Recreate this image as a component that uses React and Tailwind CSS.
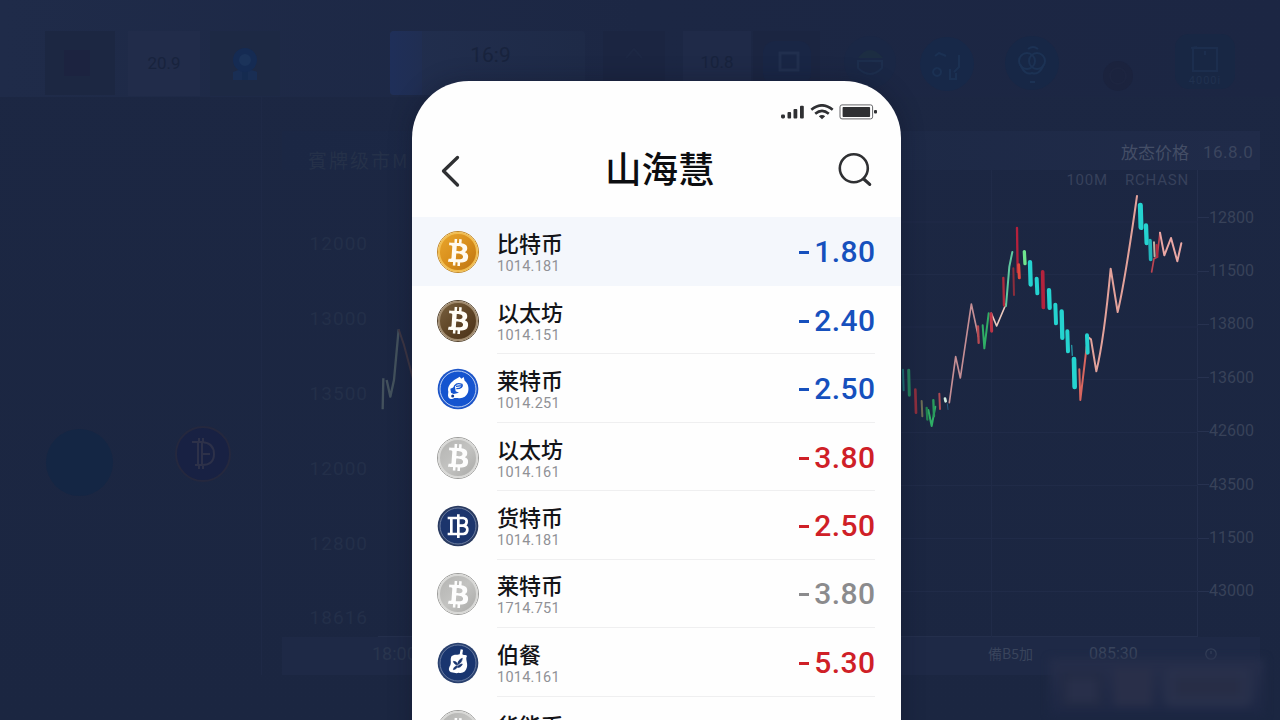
import React from "react";
import { FaBtc } from "react-icons/fa";

const cjk = "font-['Noto_Sans_CJK_SC','Noto_Sans',sans-serif]";
const latin = "font-[Roboto,'Liberation_Sans',sans-serif]";

/* ---------- coins ---------- */

function BtcCoin({ face, ring, edge, mark, tilt = "rotate-[4deg]" }) {
  return (
    <div className={`flex size-[42px] shrink-0 items-center justify-center rounded-full border ${edge}`}>
      <div className={`flex size-full items-center justify-center rounded-full border-2 ${ring} ${face}`}>
        <FaBtc className={`size-[27px] ${mark} ${tilt}`} />
      </div>
    </div>
  );
}

function LeafCoin() {
  return (
    <svg className="size-[42px] shrink-0" viewBox="0 0 126 126">
      <circle cx="63" cy="63" r="61" fill="#1d55c8" />
      <circle cx="63" cy="63" r="54" fill="#1554cf" stroke="#dfe9fb" strokeWidth="2.5" />
      <path
        d="M62 30 L68 26 L73 32 L80 27 L83 38 C93 45 97 60 93 73 C88 87 75 93 62 90 L52 90 C47 95 37 94 34 87 C31 80 36 73 33 66 C33 50 48 37 62 30Z"
        fill="#fff"
      />
      <path d="M50 62 C52 48 62 44 75 49 C78 55 73 62 58 62 M57 55 L74 53" fill="none" stroke="#1554cf" strokeWidth="4" />
      <path d="M40 62 L54 56 L56 70 L66 74 L50 78 L42 74Z" fill="#1554cf" />
      <circle cx="47" cy="84" r="4.5" fill="#123a91" />
    </svg>
  );
}

function FruitCoin() {
  return (
    <svg className="size-[42px] shrink-0" viewBox="0 0 126 126">
      <circle cx="63" cy="63" r="61" fill="#2a416f" />
      <circle cx="63" cy="63" r="54" fill="#19356f" stroke="#7486aa" strokeWidth="2.5" />
      <path
        d="M44 42 C54 35 60 40 68 37 L71 22 L78 23 L76 37 C82 41 88 38 90 42 C84 51 93 62 90 75 C87 89 77 95 65 92 C57 96 49 90 42 91 C32 86 36 76 40 70 C44 60 38 52 44 42Z"
        fill="#fff"
      />
      <path d="M76 49 C67 52 62 59 62 68 C70 65 75 58 76 49Z M49 58 C57 58 61 62 61 69 C55 68 50 64 49 58Z M76 66 C70 66 63 70 61 76 C68 77 74 73 76 66Z M49 83 C50 76 55 72 61 71 C61 78 56 82 49 83Z" fill="#19356f" stroke="#19356f" strokeWidth="2" />
    </svg>
  );
}

const gold = (
  <BtcCoin
    edge="border-[#c28726]"
    ring="border-[#f1bd50]"
    face="bg-linear-to-br from-[#e8a52c] via-[#d98f1c] to-[#bd7413]"
    mark="text-[#fffaf0]"
  />
);
const bronze = (
  <BtcCoin
    edge="border-[#54432e]"
    ring="border-[#a08a6d]"
    face="bg-linear-to-br from-[#78603f] via-[#5f4526] to-[#4b3218]"
    mark="text-[#fffdf6]"
  />
);
const silver = (
  <BtcCoin
    edge="border-[#9c9c9a]"
    ring="border-[#d8d8d6]"
    face="bg-linear-to-br from-[#b4b4b2] via-[#c3c3c1] to-[#aaaaa8]"
    mark="text-[#fdfdfd]"
  />
);

function NavyCoin() {
  return (
    <svg className="size-[42px] shrink-0" viewBox="0 0 126 126">
      <circle cx="63" cy="63" r="61" fill="#2a3b61" />
      <circle cx="63" cy="63" r="54" fill="#1c356c" stroke="#7b8aab" strokeWidth="2.5" />
      <g fill="none" stroke="#fff" strokeWidth="8">
        <path d="M32 39 H79 Q90 41 89 51 Q88 60 79 62 Q92 65 91 75 Q90 86 79 87 H32" />
        <path d="M43 39 V87 M64 28 V99 M64 62 H80" />
      </g>
    </svg>
  );
}

const rows = [
  { name: "比特币", sub: "1014.181", value: "1.80", color: "text-[#1650bd]", coin: gold, active: true },
  { name: "以太坊", sub: "1014.151", value: "2.40", color: "text-[#1650bd]", coin: bronze },
  { name: "莱特币", sub: "1014.251", value: "2.50", color: "text-[#1650bd]", coin: <LeafCoin /> },
  { name: "以太坊", sub: "1014.161", value: "3.80", color: "text-[#cf2027]", coin: silver },
  { name: "货特币", sub: "1014.181", value: "2.50", color: "text-[#cf2027]", coin: <NavyCoin /> },
  { name: "莱特币", sub: "1714.751", value: "3.80", color: "text-[#8b8b8d]", coin: silver },
  { name: "伯餐", sub: "1014.161", value: "5.30", color: "text-[#cf2027]", coin: <FruitCoin /> },
];

function Row({ row }) {
  return (
    <li className={`flex shrink-0 pl-[25px] pr-[26px] ${row.active ? "h-[69px] bg-[#f4f7fc]" : "h-[68.45px]"}`}>
      <div className="flex items-center pt-px">{row.coin}</div>
      <div className={`ml-[18px] flex flex-1 items-center justify-between border-b pt-[2px] ${row.active ? "border-transparent" : "border-[#efeff0]"}`}>
        <div className="flex flex-col pt-px">
          <span className={`${cjk} text-[22px] font-medium leading-[26px] text-[#131418]`}>{row.name}</span>
          <span className={`${latin} mt-[3px] text-[14.5px] leading-[18px] tracking-[0.25px] text-[#909196]`}>{row.sub}</span>
        </div>
        <div className={`${latin} flex items-center text-[30px] font-medium leading-none tracking-[0.4px] ${row.color}`}>
          <span className="mr-[5px] mt-px h-[3px] w-[10px] bg-current" />
          <span>{row.value}</span>
        </div>
      </div>
    </li>
  );
}

function StatusBar() {
  return (
    <div className="flex h-[60px] shrink-0 items-center justify-end pr-[24px] pt-[2px]">
      <svg className="h-[16px] w-[97px]" viewBox="0 0 97 16" fill="#2f3033">
        <rect x="1" y="10.5" width="4" height="4" rx="1.4" />
        <rect x="7.5" y="8" width="3.6" height="6.5" rx="1" />
        <rect x="13.5" y="5" width="3.8" height="9.5" rx="1" />
        <rect x="20" y="1.8" width="3.8" height="12.7" rx="1" />
        <g fill="none" stroke="#2f3033" strokeWidth="2.6">
          <path d="M31.3 5.8 Q42 -3.2 52.7 5.8" />
          <path d="M35.2 9.8 Q42 4 48.8 9.8" />
        </g>
        <path d="M38.8 12.2 Q42 9.6 45.2 12.2 L42 15.2Z" />
        <rect x="60" y="0.9" width="32.6" height="14" rx="2" fill="#fff" stroke="#66676a" strokeWidth="1" />
        <rect x="62.6" y="3" width="27.5" height="10" rx="0.8" />
        <rect x="94" y="6" width="3" height="3.6" rx="1" />
      </svg>
    </div>
  );
}

function Phone() {
  return (
    <div className="absolute left-[412px] top-[81px] flex h-[680px] w-[489.4px] flex-col overflow-hidden rounded-t-[57px] bg-[#fefefe] shadow-[0_0_22px_rgba(15,18,35,0.35)]">
      <StatusBar />
      <div className="flex h-[76px] shrink-0 items-start justify-between pl-[28px] pr-[28px]">
        <svg className="mt-[13px] h-[34px] w-[22px]" viewBox="0 0 22 34" fill="none" stroke="#2f3033" strokeWidth="3.3" strokeLinecap="round" strokeLinejoin="round">
          <path d="M17.5 3.5 L3.5 17 L17.5 31" />
        </svg>
        <h1 className={`${cjk} ml-[19px] text-[36.5px] font-medium leading-[54px] text-[#0c0d10]`}>山海慧</h1>
        <svg className="mt-[12px] h-[36px] w-[35px]" viewBox="0 0 35 36" fill="none" stroke="#2f3033" strokeLinecap="round">
          <circle cx="15.8" cy="15.3" r="14" strokeWidth="2.6" />
          <path d="M26 26.2 L31.7 31.4" strokeWidth="3.2" />
        </svg>
      </div>
      <ul className="flex shrink-0 flex-col">
        {rows.map((row, i) => (
          <Row key={i} row={row} />
        ))}
        <li className="flex h-[68px] shrink-0 pl-[25px]">
          <div className="flex items-center pt-px">{silver}</div>
          <span className={`${cjk} ml-[18px] mt-[14px] text-[22px] font-medium leading-[26px] text-[#131418]`}>华能币</span>
        </li>
      </ul>
    </div>
  );
}

/* ---------- dimmed dashboard ---------- */

function Toolbar() {
  return (
    <header className={`${latin} flex h-[97px] items-start bg-linear-to-r from-[#1f2b49] via-[#1c2744] via-50% to-[#1c2643] pt-[31px] text-[#18233d]`}>
      <div className="ml-[45px] flex h-[64px] w-[70px] items-center justify-center bg-[#1c2742]">
        <div className="mr-[6px] size-[26px] bg-[#1c2340]" />
      </div>
      <div className="ml-[13px] flex h-[65px] w-[72px] items-center justify-center bg-[#212c4a] text-[17px]">20.9</div>
      <div className="ml-[10px] flex h-[65px] w-[70px] items-center justify-center bg-[#1d2944]">
        <svg className="size-[34px]" viewBox="0 0 34 34">
          <path d="M5 25q12-6 24 0v8H5z" fill="#192e54" />
          <path d="M14 20h6v13h-6z" fill="#152b50" />
          <circle cx="17" cy="13" r="9" fill="#1b335a" stroke="#152b53" strokeWidth="6" />
        </svg>
      </div>
      <div className="ml-[110px] flex h-[64px] w-[195px] overflow-hidden rounded-[4px] bg-linear-to-r from-[#212e4e] to-[#1e2a47]">
        <div className="w-[32px] bg-linear-to-r from-[#1f2f59] to-[#202e52]" />
        <div className="mt-[10px] flex-1 pr-[26px] text-center text-[21px] leading-[28px]">16:9</div>
      </div>
      <div className="ml-[18px] flex h-[64px] w-[62px] justify-center bg-[#1b2541]">
        <svg className="mt-[14px] h-[16px] w-[22px]" viewBox="0 0 22 16" fill="none" stroke="#1d2844" strokeWidth="2">
          <path d="M3 13 L11 4 L19 13" />
        </svg>
      </div>
      <div className="ml-[18px] flex h-[64px] w-[68px] items-center justify-center bg-[#1f2a48] text-[17px]">10.8</div>
      <div className="ml-[2px] flex h-[64px] w-[67px] items-center justify-center bg-[#1b2541]">
        <svg className="size-[50px]" viewBox="0 0 50 50">
          <rect x="1" y="3" width="48" height="44" rx="12" fill="#192645" />
          <rect x="18" y="15" width="18" height="17" fill="none" stroke="#212f4e" strokeWidth="3" />
        </svg>
      </div>
      <svg className="ml-[20px] size-[62px]" viewBox="0 0 62 62">
        <circle cx="30" cy="31" r="26" fill="#1a2745" />
        <path d="M18 27q12-16 25 0z" fill="#1c2d42" />
        <path d="M18 30v7q12 12 24 0v-7z" fill="none" stroke="#1d2e4d" strokeWidth="2" />
      </svg>
      <svg className="ml-[15px] size-[62px]" viewBox="0 0 62 62">
        <circle cx="30" cy="33" r="27" fill="#172848" />
        <path d="M18 25l4-3 7 3M20 37a4 4 0 1 0 .1 0M42 24v12l-5 5M33 38v10h6v-6" fill="none" stroke="#1b3153" strokeWidth="2" />
      </svg>
      <svg className="ml-[23px] size-[62px]" viewBox="0 0 62 62">
        <circle cx="30" cy="32" r="27" fill="#172746" />
        <g fill="none" stroke="#1c3254" strokeWidth="2">
          <circle cx="25" cy="30" r="8" />
          <circle cx="35" cy="30" r="8" />
          <path d="M18 33q5 12 12 9q7 3 12-9M26 18q5-4 10 0M28 51h5" />
        </g>
      </svg>
      <svg className="ml-[24px] mt-[14px] size-[62px]" viewBox="0 0 62 62">
        <circle cx="30" cy="31" r="15" fill="#1b233e" />
        <circle cx="30" cy="31" r="8" fill="none" stroke="#1d2540" strokeWidth="2" />
      </svg>
      <div className="ml-[25px] mt-[3px] flex h-[55px] w-[60px] flex-col items-center justify-end rounded-[14px] bg-[#182744]">
        <svg className="h-[28px] w-[34px]" viewBox="0 0 34 28" fill="none" stroke="#1c2e4e" strokeWidth="2">
          <path d="M5 3h24v23H5zM3 3l6-1M17 6v4" />
        </svg>
        <span className="text-[11px] leading-[16px] tracking-[1px] text-[#20314f]">4000i</span>
      </div>
    </header>
  );
}

const leftTicks = ["12000", "13000", "13500", "12000", "12800", "18616"];
const rightTicks = ["12800", "11500", "13800", "13600", "42600", "43500", "11500", "43000"];

/* [x, top, bottom, width, colour] in chart units */
const candles = [
  [40, 566, 634, 6, "#1c6e73"], [57, 566, 650, 9, "#25855f"], [77, 625, 702, 8, "#8c2f3e"], [96, 660, 712, 6, "#6d6d55"],
  [111, 680, 722, 7, "#21824f"], [131, 657, 712, 7, "#2a9a5c"], [149, 638, 690, 6, "#b04a53"], [166, 652, 668, 8, "#d5efe4"],
  [173, 670, 690, 3, "#27597f"], [265, 436, 492, 7, "#b84a52"], [304, 397, 458, 9, "#bd3447"], [341, 290, 380, 7, "#b02a3d"],
  [371, 262, 348, 6, "#8b2d3c"], [382, 140, 280, 7, "#b5203c"], [387, 250, 298, 9, "#e04a3e"], [404, 210, 256, 10, "#6fe58e"],
  [421, 240, 320, 13, "#25d3d0"], [441, 290, 346, 12, "#25d3d0"], [459, 270, 388, 11, "#b3233d"], [478, 324, 390, 13, "#25d3d0"],
  [497, 368, 436, 12, "#25d3d0"], [516, 388, 480, 13, "#25d3d0"], [533, 448, 520, 12, "#25d3d0"], [546, 494, 528, 4, "#2595a5"],
  [553, 530, 628, 14, "#25d3d0"], [592, 460, 524, 12, "#25d3d0"], [752, 68, 150, 15, "#25d3d0"], [769, 130, 196, 13, "#25d3d0"],
  [781, 176, 244, 11, "#22b5bb"], [793, 184, 232, 6, "#b7b3a3"], [801, 192, 234, 7, "#b32c40"],
];

function Plot() {
  return (
    <svg className="h-[467px] w-[820px]" viewBox="378 170 820 467">
      <g stroke="#202b48" strokeWidth="1">
        {[222, 274.5, 327, 379.5, 432.5, 485.5, 538.5, 591.5].map((y) => (
          <path key={y} d={`M880 ${y}H1198`} />
        ))}
        <path d="M991.5 170V637" />
      </g>
      <g transform="translate(0 220) scale(.33333)" fill="none" strokeLinejoin="round">
        <path d="M1148 568 L1150 475 M1160 480 L1171 530 L1182 480 L1196 328" stroke="#43515c" strokeWidth="7" />
        <path d="M1196 328 L1212 375 L1240 480" stroke="#3d3643" strokeWidth="6" />
      </g>
      <g transform="translate(890 180) scale(.33333)" fill="none" strokeLinejoin="round" strokeLinecap="round">
        <path d="M178 668 L197 530 L211 594 L244 372 L265 470" stroke="#c58f95" strokeWidth="5" />
        <path d="M278 436 L283 505 L296 400 M115 690 L125 738 L136 680" stroke="#2fae66" strokeWidth="6" />
        <path d="M304 400 L320 438 L348 372" stroke="#ecc9bd" strokeWidth="5" />
        <path d="M348 378 L358 260 L367 216" stroke="#5fc9a0" strokeWidth="6" />
        <path d="M568 568 L571 660 L590 500" stroke="#d9665f" strokeWidth="6" />
        <path d="M592 470 L603 478 L619 574 Q642 480 662 266 L683 396 Q704 310 741 48" stroke="#e3a29b" strokeWidth="6" />
        <path d="M785 276 L792 236 L801 232 L810 158" stroke="#bd4552" strokeWidth="5" />
        <path d="M810 158 L823 226 L843 174 L862 244 L874 190" stroke="#eaa7a4" strokeWidth="6" />
        {candles.map(([x, top, bottom, w, color], i) => (
          <path key={i} d={`M${x - 1} ${top + w / 2}L${x + 1} ${bottom - w / 2}`} stroke={color} strokeWidth={w} />
        ))}
      </g>
    </svg>
  );
}

function ChartPanel() {
  return (
    <section className={`${latin} mt-[34px] flex w-[978px] flex-col`}>
      <div className={`${cjk} flex h-[39px] items-center bg-linear-to-r from-[#1b2744] via-[#1d2946] via-60% to-[#202b49]`}>
        <span className="ml-[26px] mt-[18px] flex-1 text-[19px] leading-[24px] tracking-[2px] text-[#253149]">賓牌级市M</span>
        <span className="mt-[2px] w-[77px] text-[17px] text-[#444e66]">放态价格</span>
        <span className={`${latin} ml-[5px] mt-[4px] w-[57px] text-[17px] tracking-[0.5px] text-[#3b455e]`}>16.8.0</span>
      </div>
      <div className="flex h-[467px]">
        <div className="flex w-[96px] flex-col items-end pr-[10px] pt-[36px] text-[19px] tracking-[1px] text-[#232f49]">
          {leftTicks.map((t, i) => (
            <span key={i} className="h-[74.9px] leading-[75px]">{t}</span>
          ))}
        </div>
        <div className="relative h-full w-[820px] border-b border-r border-[#242f4c]">
          <Plot />
          <div className="absolute right-[8px] top-0 flex gap-[17px] text-[15px] leading-[20px] tracking-[0.8px] text-[#37415b]">
            <span>100M</span>
            <span>RCHASN</span>
          </div>
        </div>
        <div className="flex flex-1 flex-col pt-[21px] text-[16px] text-[#384259]">
          {rightTicks.map((t, i) => (
            <div key={i} className="flex h-[53.4px] items-center">
              <span className="h-px w-[11px] bg-[#273250]" />
              <span>{t}</span>
            </div>
          ))}
        </div>
      </div>
      <div className="flex h-[38px] items-center bg-[#1e2946] pb-[5px] text-[16px] text-[#39445c]">
        <span className="ml-[90px] w-[616px] text-[18px] text-[#29354e]">18:00</span>
        <span className={`${cjk} w-[101px] text-[14px]`}>備B5加</span>
        <span className="w-[115px]">085:30</span>
        <svg className="size-[14px]" viewBox="0 0 14 14" fill="none" stroke="#333e57" strokeWidth="1.3">
          <circle cx="7" cy="7" r="5.2" />
          <path d="M7 4v3" />
        </svg>
      </div>
    </section>
  );
}

function Dashboard() {
  return (
    <div className="flex h-[720px] w-[1280px] flex-col bg-linear-to-b from-[#1c2743] to-[#1b2641]">
      <Toolbar />
      <main className="flex">
        <aside className="flex w-[262px] items-start border-r border-[#1e2946] pt-[328px]">
          <div className="ml-[46px] mt-[4px] size-[67px] rounded-full bg-[#142644]" />
          <div className="ml-[62px] mt-px flex size-[56px] items-center justify-center rounded-full border-2 border-[#25283e] bg-[#182143]">
            <svg className="h-[34px] w-[26px]" viewBox="0 0 26 34" fill="none" stroke="#2d3149" strokeWidth="2">
              <path d="M2 5h10q12 1 12 12q0 11-12 11H5M8 5v23M12 5v23M9 1v4M13 1v4M9 28v4M13 28v4M13 17h7" />
            </svg>
          </div>
        </aside>
        <div className="w-[20px]" />
        <ChartPanel />
      </main>
    </div>
  );
}

function Watermark() {
  return (
    <div className="absolute left-[1050px] top-[659px] flex h-[56px] w-[214px] items-center gap-[12px] overflow-hidden bg-linear-to-b from-[#262e4a] to-[#1d2744] px-[12px] blur-[4px]">
      <div className="mt-[6px] h-[34px] w-[40px] border-[5px] border-[#222a43] bg-[#282f4a]" />
      <div className="h-[38px] w-[38px] bg-[#292f49]" />
      <div className="flex h-[40px] flex-1 items-center rounded-[8px] bg-[#28304b] px-[12px]">
        <div className="h-[18px] w-full bg-[#272d46]" />
      </div>
    </div>
  );
}

export default function App() {
  return (
    <div className="relative h-[720px] w-[1280px] overflow-hidden bg-[#1b2641]">
      <Dashboard />
      <Watermark />
      <Phone />
    </div>
  );
}
